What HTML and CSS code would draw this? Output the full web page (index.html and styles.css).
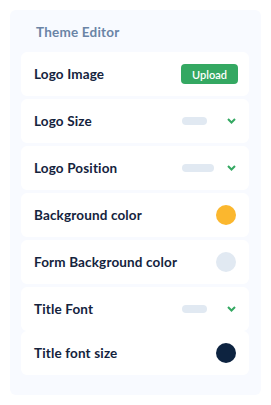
FILE: index.html
```html
<!DOCTYPE html>
<html>
<head>
    <meta charset="UTF-8">
    <meta name="viewport" content="width=device-width, initial-scale=1.0">
    <title>Theme Editor</title>
    <link rel="stylesheet" href="styles.css">
</head>
<body>
    <div class="panel">
        <h2 class="panel-title">Theme Editor</h2>
        <div class="rows">
            <div class="row">
                <span class="label">Logo Image</span>
                <button class="upload">Upload</button>
            </div>
            <div class="row">
                <span class="label">Logo Size</span>
                <div class="select">
                    <span class="pill"></span>
                    <svg class="chevron" width="9" height="6" viewBox="0 0 9 6"><path d="M1 1 L4.5 4.5 L8 1" fill="none" stroke="#34a862" stroke-width="2"/></svg>
                </div>
            </div>
            <div class="row">
                <span class="label">Logo Position</span>
                <div class="select">
                    <span class="pill pill-wide"></span>
                    <svg class="chevron" width="9" height="6" viewBox="0 0 9 6"><path d="M1 1 L4.5 4.5 L8 1" fill="none" stroke="#34a862" stroke-width="2"/></svg>
                </div>
            </div>
            <div class="row">
                <span class="label">Background color</span>
                <span class="swatch swatch-yellow"></span>
            </div>
            <div class="row">
                <span class="label">Form Background color</span>
                <span class="swatch swatch-light"></span>
            </div>
            <div class="row">
                <span class="label">Title Font</span>
                <div class="select">
                    <span class="pill"></span>
                    <svg class="chevron" width="9" height="6" viewBox="0 0 9 6"><path d="M1 1 L4.5 4.5 L8 1" fill="none" stroke="#34a862" stroke-width="2"/></svg>
                </div>
            </div>
            <div class="row row-last">
                <span class="label">Title font size</span>
                <span class="swatch swatch-navy"></span>
            </div>
        </div>
    </div>
</body>
</html>
```

FILE: styles.css
```css
:root {
    --green: #34a862;
    --navy: #14233d;
    --pale: #e1e9f2;
    --panel: #f8faff;
}

* {
    margin: 0;
    padding: 0;
    box-sizing: border-box;
}

body {
    font-family: Lato, 'Noto Sans', sans-serif;
    background: white;
    color: var(--navy);
}

.panel {
    margin: 10px;
    width: 251px;
    height: 385px;
    background: var(--panel);
    border-radius: 6px;
    padding: 0 12px 0 11px;
}

.panel-title {
    font-size: 13.5px;
    font-weight: 700;
    color: #6a84a6;
    padding: 14px 0 0 15px;
    height: 42px;
    line-height: 16px;
    letter-spacing: 0.2px;
}

.rows {
    display: flex;
    flex-direction: column;
    gap: 3px;
}

.row {
    height: 44px;
    background: white;
    border-radius: 6px;
    display: flex;
    align-items: center;
    justify-content: space-between;
    padding: 0 13px 0 13px;
}

.row-last {
    margin-top: -3px;
}

.label {
    font-size: 13.5px;
    font-weight: 700;
    letter-spacing: 0.15px;
}

.upload {
    width: 57px;
    height: 20px;
    margin-right: -2px;
    background: var(--green);
    color: white;
    border: none;
    border-radius: 4px;
    font-family: inherit;
    font-size: 11px;
    font-weight: 600;
}

.select {
    width: 54px;
    display: flex;
    align-items: center;
    justify-content: space-between;
}

.pill {
    width: 25px;
    height: 8px;
    border-radius: 4px;
    background: var(--pale);
}

.pill-wide {
    width: 32px;
}

.chevron {
    display: block;
}

.swatch {
    width: 20px;
    height: 20px;
    border-radius: 50%;
}

.swatch-yellow { background: #fbb72e; }
.swatch-light { background: var(--pale); }
.swatch-navy { background: #0d2340; }
```
